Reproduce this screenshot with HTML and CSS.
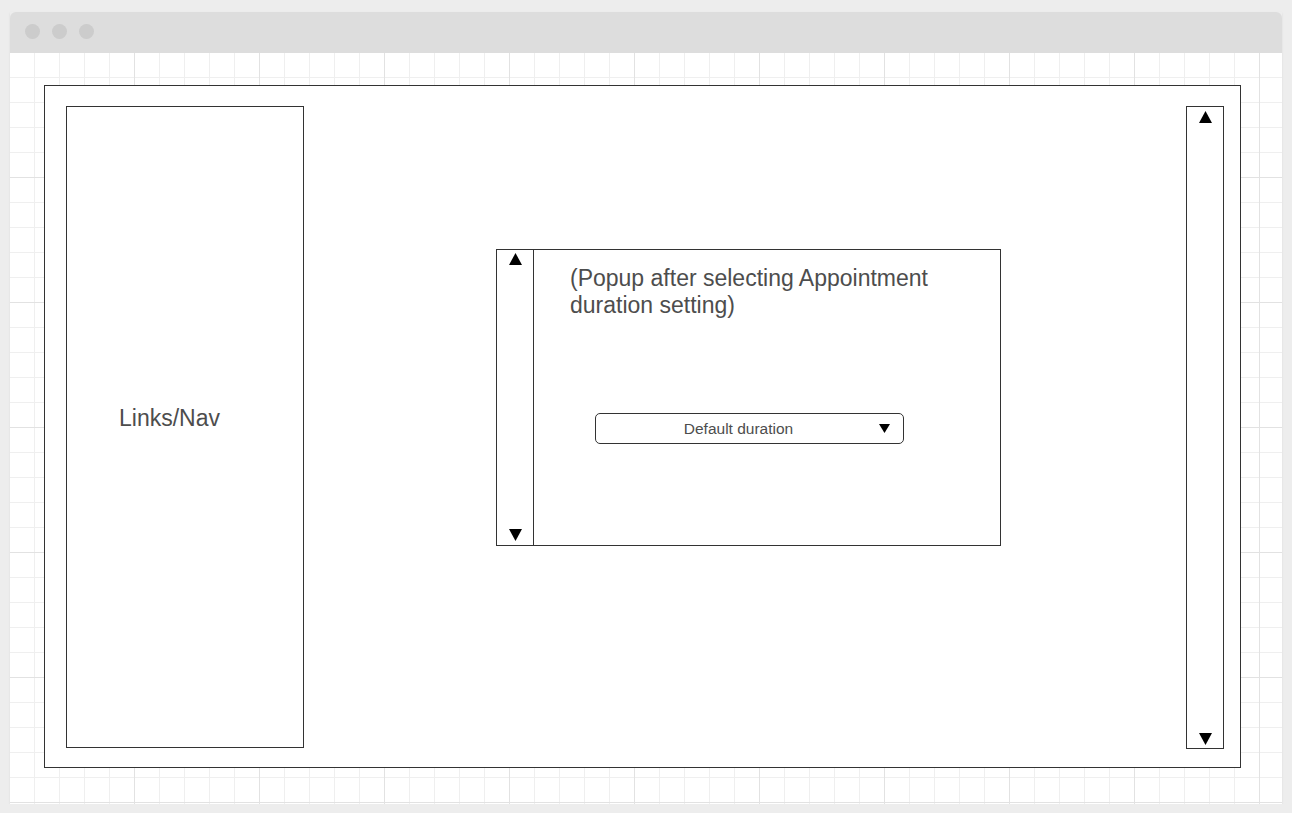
FILE: index.html
```html
<!DOCTYPE html>
<html lang="en">
<head>
    <meta charset="UTF-8">
    <title>Appointment duration popup</title>
    <link rel="stylesheet" href="styles.css">
</head>
<body>
    <div class="window">
        <div class="titlebar">
            <span class="dot"></span>
            <span class="dot"></span>
            <span class="dot"></span>
        </div>
        <div class="canvas">
            <div class="page">
                <div class="nav">Links/Nav</div>

                <div class="main">
                    <div class="popup">
                        <div class="scroll">
                            <svg class="arrow" width="13" height="12" viewBox="0 0 13 12"><polygon points="6.5,0 13,12 0,12" fill="#000"/></svg>
                            <svg class="arrow" width="13" height="12" viewBox="0 0 13 12"><polygon points="0,0 13,0 6.5,12" fill="#000"/></svg>
                        </div>
                        <div class="popup-body">
                            <p class="popup-title">(Popup after selecting Appointment duration setting)</p>
                            <div class="select">
                                <span>Default duration</span>
                                <svg class="caret" width="11" height="9" viewBox="0 0 11 9"><polygon points="0,0 11,0 5.5,9" fill="#000"/></svg>
                            </div>
                        </div>
                    </div>
                </div>

                <div class="scroll scroll-page">
                    <svg class="arrow" width="13" height="12" viewBox="0 0 13 12"><polygon points="6.5,0 13,12 0,12" fill="#000"/></svg>
                    <svg class="arrow" width="13" height="12" viewBox="0 0 13 12"><polygon points="0,0 13,0 6.5,12" fill="#000"/></svg>
                </div>
            </div>
        </div>
    </div>
</body>
</html>
```

FILE: styles.css
```css
body {
    margin: 0;
    padding: 12px 10px 0;
    background: #ededed;
    font-family: "Liberation Sans", Arial, sans-serif;
}

.window {
    width: 1272px;
    box-shadow: 0 1px 2px rgba(0,0,0,0.08);
}

.titlebar {
    height: 41px;
    background: #dddddd;
    border-radius: 6px 6px 0 0;
    display: flex;
    align-items: flex-start;
    gap: 12px;
    padding-left: 15px;
    box-sizing: border-box;
    padding-top: 12px;
}

.dot {
    width: 15px;
    height: 15px;
    border-radius: 50%;
    background: #cccccc;
}

/* grid: minor every 25px, major every 125px */
.canvas {
    height: 751px;
    box-sizing: border-box;
    padding: 32px 0 0 34px;
    background-color: #fff;
    background-image:
        linear-gradient(to right, #e2e2e2 1px, transparent 1px),
        linear-gradient(to bottom, #e2e2e2 1px, transparent 1px),
        linear-gradient(to right, #efefef 1px, transparent 1px),
        linear-gradient(to bottom, #efefef 1px, transparent 1px);
    background-size: 125px 125px, 125px 125px, 25px 25px, 25px 25px;
    background-position: -1px -1px, -1px -1px, -1px -1px, -1px -1px;
}

.page {
    width: 1197px;
    height: 683px;
    box-sizing: border-box;
    border: 1px solid #333;
    background: #fff;
    display: flex;
    padding: 20px 16px 0 21px;
}

.nav {
    width: 238px;
    height: 642px;
    box-sizing: border-box;
    border: 1px solid #333;
    display: flex;
    align-items: center;
    padding: 0 0 18px 52px;
    font-size: 23px;
    color: #4d4d4d;
}

.main {
    flex: 1;
    padding: 143px 0 0 192px;
}

.popup {
    width: 505px;
    height: 297px;
    box-sizing: border-box;
    border: 1px solid #333;
    display: flex;
}

.scroll {
    width: 37px;
    box-sizing: border-box;
    border-right: 1px solid #333;
    display: flex;
    flex-direction: column;
    justify-content: space-between;
    align-items: center;
    padding: 3px 0 4px;
}

.scroll-page {
    width: 38px;
    height: 643px;
    border: 1px solid #333;
    padding: 4px 0 3px;
}

.popup-body {
    flex: 1;
    padding: 15px 0 0 36px;
}

.popup-title {
    margin: 0;
    width: 400px;
    font-size: 23px;
    line-height: 27px;
    color: #4d4d4d;
}

.select {
    width: 309px;
    height: 31px;
    box-sizing: border-box;
    margin: 94px 0 0 25px;
    border: 1px solid #333;
    border-radius: 5px;
    display: flex;
    align-items: center;
    position: relative;
    font-size: 15.5px;
    color: #4d4d4d;
    padding-right: 22px;
}

.select span {
    flex: 1;
    text-align: center;
}

.caret {
    position: absolute;
    right: 13px;
    top: 10px;
}
```
